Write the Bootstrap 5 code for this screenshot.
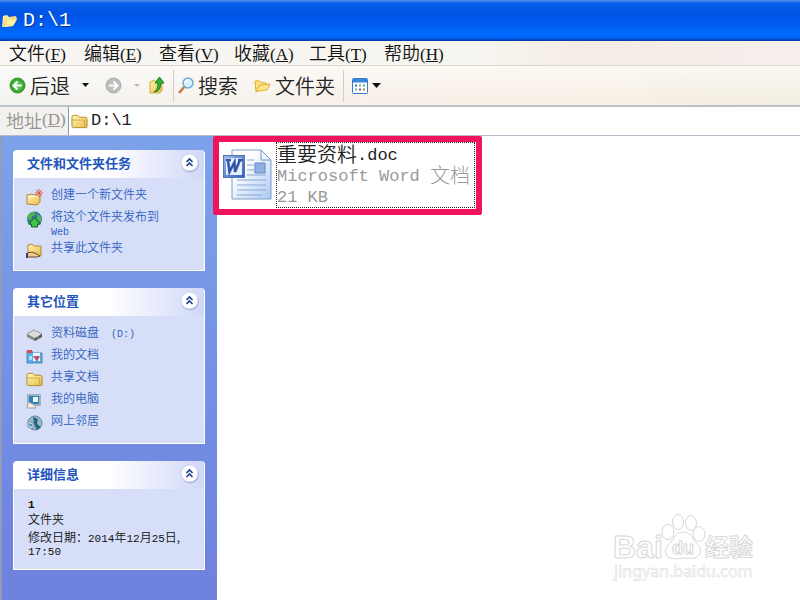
<!DOCTYPE html>
<html lang="zh-CN">
<head>
<meta charset="utf-8">
<meta name="viewport" content="width=device-width, initial-scale=1">
<title>D:\1</title>
<link rel="stylesheet" href="https://cdn.jsdelivr.net/npm/bootstrap@5.3.0/dist/css/bootstrap.min.css">
<style>
body{font-family:"Noto Sans CJK SC",sans-serif;font-size:12px;line-height:1;color:#111;background:#fff}
button{font:inherit;color:inherit;border:0;background:none;padding:0;white-space:nowrap}
.en{font-family:"Liberation Mono",monospace;font-size:17px;line-height:0}
.key{font-family:"Liberation Serif",serif;font-size:17px;line-height:0}
.titlebar{height:41px;background:linear-gradient(#5595e8 0,#0c60ee 3px,#0054e3 12px,#0058ee 22px,#006cff 34px,#0064fa 38px,#0040b0 40px);color:#fff;gap:5px;padding:0 1px}
.titlebar .en{font-size:20px;line-height:24px;text-shadow:1px 1px #02308e}
.menus{height:25px;padding-left:9px;background:linear-gradient(90deg,#f7f6f4,#f6f5ef 60%,#f6ece7 72%,#f5eeea);border-bottom:1px solid #ddd8c8}
.menus button{width:75px;text-align:left;font-size:18px;font-weight:350;padding-bottom:2px}
.tools{height:41px;padding-left:9px;background:linear-gradient(rgba(255,255,255,.6),rgba(255,255,255,0)),linear-gradient(90deg,#f4f3ef,#f8eee4 62%,#f2ede0);border-bottom:2px solid #b9c4c6}
.tools button{font-size:20px;font-weight:350;color:#222;display:flex;align-items:center;gap:4px}
.tools .sep{width:1px;height:32px;background:#d0cec5}
.addr{height:29px;background:#f2f1ed;border-bottom:1px solid #b8bbc8}
.addr label{width:68px;padding:0 0 2px 6px;font-size:18px;font-weight:350;color:#929292;white-space:nowrap}
.field{background:#fff;border-left:1px solid #7f9db9;gap:3px;padding-left:2px}
.field input{border:0;outline:0;color:#222;padding:0;min-width:0;line-height:22px}
.side{width:217px;background:linear-gradient(#7ca2ea,#6f84e0 88%,#6e82de);border-left:2px solid #929bb8;padding:14px 12px 0 11px}
.panel{background:#d7dff8;border:1px solid #fff;border-top:0;border-radius:4px 4px 0 0;margin-bottom:17px;font-weight:350}
.panel h2{height:28px;margin:0;padding:0 4px 2px 13px;background:linear-gradient(90deg,#fff 50%,#d0d8f8);border-radius:4px 4px 0 0;font-size:13px;font-weight:700;color:#1f55bd}
.panel ul{margin:0;padding:7px 10px 10px 12px;list-style:none}
.panel li{min-height:22px;display:flex;gap:8px;align-items:flex-start;padding-top:2px}
.panel li svg{margin-top:2px;flex:none}
.panel a{color:#2f62bf;text-decoration:none;line-height:14px;font-size:12px}
.panel .en{font-size:10px}
.tasks{min-height:121px}
.tasks li:nth-child(2){min-height:31px}
.places{min-height:156px}
.details{min-height:109px}
.details .info{padding:10px 10px 10px 14px;line-height:13px}
.info p{margin:0}
.info .en{font-size:11px}
.info .when{margin-top:5px}
.info .en.fw-bold{line-height:13px}
.content{min-width:0}
.file{position:relative;width:269px;height:79px;margin-left:-4px;border:6px solid #f0145c;border-radius:2px;padding-left:4px;text-align:left;gap:4px;background:#fff}
.file .names{border:1px dotted #222;height:66px;width:199px;font-size:20px;line-height:21px;font-weight:300;color:#999;white-space:nowrap}
.names .fn{color:#222;font-weight:350}
.names span{display:block;height:21px}
.names b{font-weight:400;vertical-align:2px}
.watermark{position:absolute;right:40px;bottom:14px}
</style>
<script src="https://cdn.jsdelivr.net/npm/bootstrap@5.3.0/dist/js/bootstrap.bundle.min.js"></script>
</head>
<body>
<svg class="position-absolute" width="0" height="0" xmlns="http://www.w3.org/2000/svg">
<defs>
<linearGradient id="gold" x2="1" y2="1"><stop stop-color="#fff6b8"/><stop offset="1" stop-color="#e9bc45"/></linearGradient>
<radialGradient id="green"><stop stop-color="#7ddb68"/><stop offset="1" stop-color="#279a28"/></radialGradient>
<linearGradient id="paper" x2="1" y2="1"><stop offset=".3" stop-color="#fff"/><stop offset="1" stop-color="#a9c9f5"/></linearGradient>
<linearGradient id="blue" x2="1" y2="1"><stop stop-color="#9dbcf0"/><stop offset="1" stop-color="#2f5db5"/></linearGradient>
</defs>
<symbol id="folder" viewBox="0 0 18 16"><path d="M1 13V4q0-2 2-2h4l2 2h6q2 0 2 2v8q0 1-1 1H3q-2 0-2-2z" fill="url(#gold)" stroke="#b38a1d"/><path d="M2 7h13" stroke="#fff5b8"/><path d="M1.5 7h13v7" fill="none" stroke="#c9a23c"/></symbol>
<symbol id="open" viewBox="0 0 18 16"><path d="M2 13L1 3l4-1 2 2 6 1v3" fill="#fbe184" stroke="#e3a92a"/><path d="M2 14l4-7 11-1-3 6z" fill="#fce78f" stroke="#e3a92a"/></symbol>
<symbol id="fold" viewBox="0 0 20 20"><circle cx="10" cy="10.500" r="9" fill="#7d8bb8" opacity=".5"/><circle cx="9.500" cy="9.500" r="8.500" fill="#fff" stroke="#ccd3e8"/><path d="M6.500 9l3-3 3 3M6.500 13l3-3 3 3" fill="none" stroke="#1f3f85" stroke-width="1.600"/></symbol>
</svg>
<div class="d-flex flex-column min-vh-100">
<header class="titlebar d-flex align-items-center"><svg width="17" height="18" viewBox="0 0 17 18"><path d="M1 15L2 4l4-1 2 2 7-1 1 3-4 7z" fill="url(#gold)"/><path d="M3 15l4-7 9-1-4 7z" fill="#fff0a0"/></svg><span class="en">D:\1</span></header>
<nav class="menus d-flex align-items-center" aria-label="菜单">
<button>文件<span class="key">(<u>F</u>)</span></button><button>编辑<span class="key">(<u>E</u>)</span></button><button>查看<span class="key">(<u>V</u>)</span></button><button>收藏<span class="key">(<u>A</u>)</span></button><button>工具<span class="key">(<u>T</u>)</span></button><button>帮助<span class="key">(<u>H</u>)</span></button>
</nav>
<div class="tools d-flex align-items-center" role="toolbar">
<button><svg width="17" height="17" viewBox="0 0 17 17"><circle cx="8.500" cy="8.500" r="7.500" fill="url(#green)" stroke="#369332"/><path d="M13 8.500H5M8.500 4.500l-4 4 4 4" fill="none" stroke="#fff" stroke-width="2"/></svg>后退</button>
<button class="ms-2 ps-1" aria-label="后退历史"><svg width="7" height="5"><path d="M0 0h7L3.500 4z" fill="#111"/></svg></button>
<button class="ms-3" aria-label="前进"><svg width="17" height="17" viewBox="0 0 17 17"><circle cx="8.500" cy="8.500" r="7.500" fill="#bdbdbd" stroke="#aaa"/><path d="M4 8.500h8M8.500 4.500l4 4-4 4" fill="none" stroke="#fff" stroke-width="2"/></svg></button>
<button class="ms-2 ps-1" aria-label="前进历史"><svg width="6" height="4"><path d="M0 0h6L3 3z" fill="#bbb"/></svg></button>
<button class="ms-2" aria-label="向上"><svg width="17" height="19" viewBox="0 0 17 19"><path d="M2 17V6l4-2 2 2h6v9l-3 2z" fill="url(#gold)" stroke="#d2ad3e"/><path d="M6 16q4-1 4-9H7l4.500-6L16 7h-3q0 8-7 9z" fill="#36ac35" stroke="#188022"/></svg></button>
<span class="sep ms-2"></span>
<button class="ms-1"><svg width="16" height="17" viewBox="0 0 16 17"><path d="M1 16l6-7" stroke="#bd7d51" stroke-width="2.500"/><circle cx="10" cy="6" r="5" fill="#d4efff" stroke="#73a7d2" stroke-width="1.500"/><path d="M7 6q1-3 3-3" fill="none" stroke="#fff" stroke-width="1.500"/></svg>搜索</button>
<button class="ms-3"><svg width="17" height="16"><use href="#open"/></svg>文件夹</button>
<span class="sep ms-2 me-2"></span>
<button aria-label="查看方式"><svg width="16" height="16" viewBox="0 0 16 16"><rect x=".5" y=".5" width="15" height="15" rx="1" fill="#fff" stroke="#3278cc"/><path d="M1 2.500h14" stroke="#3d83db" stroke-width="4"/><path d="M3 7.500h2M7 11.500h2" stroke="#3c6bd5" stroke-width="2"/><path d="M7 7.500h2M3 11.500h2" stroke="#8c9bb4" stroke-width="2"/><path d="M11 7.500h2" stroke="#51aa46" stroke-width="2"/><path d="M11 11.500h2" stroke="#e4702a" stroke-width="2"/></svg><svg width="9" height="6"><path d="M0 0h9L4.500 5z" fill="#111"/></svg></button>
</div>
<div class="addr d-flex align-items-stretch"><label for="path" class="d-flex align-items-center">地址<span class="key">(<u>D</u>)</span></label><div class="field d-flex flex-grow-1 align-items-center"><svg width="17" height="16"><use href="#folder"/></svg><input id="path" class="en flex-grow-1" value="D:\1"></div></div>
<main class="d-flex flex-grow-1">
<aside class="side flex-shrink-0">
<section class="panel tasks"><h2 class="d-flex align-items-center justify-content-between">文件和文件夹任务<button aria-label="折叠"><svg width="20" height="20"><use href="#fold"/></svg></button></h2>
<ul>
<li><svg width="17" height="17" viewBox="0 0 17 17"><path d="M1 15V6l5-1 2 1h6v7l-3 3z" fill="url(#gold)" stroke="#ad8330"/><path d="M2 8l10-1 1-2" fill="none" stroke="#fff"/><path d="M13 0v8M9 4h8M10 1l6 6M16 1l-6 6" stroke="#e65539"/></svg><a href="#">创建一个新文件夹</a></li>
<li><svg width="17" height="17" viewBox="0 0 17 17"><circle cx="8.500" cy="8" r="7.500" fill="#2f789d"/><path d="M1 8q1-7 7-7l2 3-4 1-1 4zM11 3l4 3v5l-4-2z" fill="#50b848"/><path d="M8.500 7l6 6h-3v3h-6v-3h-3z" fill="#43c348" stroke="#116c25"/></svg><a href="#">将这个文件夹发布到<br><span class="en">Web</span></a></li>
<li><svg width="17" height="17" viewBox="0 0 17 17"><path d="M2 12V3l4-1 2 2h7v10z" fill="url(#gold)" stroke="#b38a2d"/><path d="M1 11l5-1 5 2 3 2-3 1H1z" fill="#efc58b" stroke="#70492d"/><path d="M0 11v5h2v-5z" fill="#34466b"/></svg><a href="#">共享此文件夹</a></li>
</ul></section>
<section class="panel places"><h2 class="d-flex align-items-center justify-content-between">其它位置<button aria-label="折叠"><svg width="20" height="20"><use href="#fold"/></svg></button></h2>
<ul>
<li><svg width="17" height="16" viewBox="0 0 17 16"><path d="M1 7l7-4 8 4-7 5z" fill="#ddd" stroke="#999"/><path d="M1 7l8 4v3L1 10z" fill="#888"/><path d="M9 11l7-4v3l-7 4z" fill="#555"/><path d="M11 11l2-1" stroke="#7dd15b"/></svg><a href="#">资料磁盘<span class="en">&nbsp;&nbsp;(D:)</span></a></li>
<li><svg width="17" height="16" viewBox="0 0 17 16"><path d="M1 14V2h5l1 2h9v10z" fill="#58afe3" stroke="#4589bd"/><path d="M1 1h5v3H1z" fill="#d64b54"/><path d="M7 4h7v8H7z" fill="#e8f5ff"/><path d="M7 7l4 6 3-6z" fill="#bf5269"/><path d="M3 7h3v4H3z" fill="#a6e2ff"/></svg><a href="#">我的文档</a></li>
<li><svg width="17" height="16"><use href="#folder"/></svg><a href="#">共享文档</a></li>
<li><svg width="17" height="16" viewBox="0 0 17 16"><path d="M2 2h12v10H2z" fill="#2e82b5" stroke="#9fb1bf" stroke-width="2"/><path d="M7 4h5v5H7z" fill="#e6f7ff"/><path d="M2 9l5 2 3 4H1z" fill="#f1eee6" stroke="#a4a19e"/></svg><a href="#">我的电脑</a></li>
<li><svg width="17" height="17" viewBox="0 0 17 17"><circle cx="9" cy="8" r="7" fill="#9bbad0" stroke="#668199"/><path d="M7 2l5 2-1 5 4 3-4 3-3-6z" fill="#246680"/><path d="M2 6l5 2v6l-5-2z" fill="#eef7ff" stroke="#738b9f"/><path d="M3 8l3 1v3l-3-1z" fill="#4d9cc4"/></svg><a href="#">网上邻居</a></li>
</ul></section>
<section class="panel details"><h2 class="d-flex align-items-center justify-content-between">详细信息<button aria-label="折叠"><svg width="20" height="20"><use href="#fold"/></svg></button></h2>
<div class="info"><p class="en fw-bold">1</p><p>文件夹</p><p class="when">修改日期：<span class="en">2014</span>年<span class="en">12</span>月<span class="en">25</span>日,<br><span class="en">17:50</span></p></div></section>
</aside>
<section class="content flex-grow-1">
<button class="file d-flex">
<svg width="49" height="66" viewBox="0 0 49 66"><path d="M9 8h29l10 10v39H9z" fill="url(#paper)" stroke="#7e9cc9"/><path d="M38 8v10h10z" fill="#eaf3ff" stroke="#7895bf"/><path d="M24 18h7M24 23h7M24 28h7M24 33h19M14 38h29M14 43h29M14 48h29M14 53h25" stroke="#8aa9d6"/><path d="M32 21h10v10H32z" fill="#8eb0e1" stroke="#6589c3"/><rect x=".5" y="13.500" width="21" height="22" fill="url(#blue)" stroke="#5375ae"/><path d="M3 16h16v17H3z" fill="#e7effc"/><path d="M3 18h5M5 18l1.500 12 5-10 .5 10 5-12M15 18h5" fill="none" stroke="#3157a7" stroke-width="2.500"/></svg>
<span class="names"><span class="fn">重要资料<b class="en">.doc</b></span><span><b class="en">Microsoft Word </b>文档</span><span><b class="en">21 KB</b></span></span>
</button>
</section>
</main>
</div>
<svg class="watermark" width="148" height="76" viewBox="0 0 148 76" role="img" aria-label="Baidu 经验">
<g fill="#fff" stroke="#d8d8d8" stroke-width="1">
<ellipse cx="56" cy="22" rx="6" ry="7.500"/><ellipse cx="66" cy="12" rx="5.500" ry="7.500"/><ellipse cx="79" cy="13" rx="5.500" ry="7.500"/><ellipse cx="87" cy="24" rx="6" ry="7.500"/>
<path d="M71 22q8 0 12 10 8 6 5 12-3 6-17 4-14 3-17-4-2-7 6-13 4-9 11-9z"/>
<text x="1" y="48" font-family="Liberation Sans,sans-serif" font-weight="700" font-size="32">Bai</text>
<text x="60" y="44" font-family="Liberation Sans,sans-serif" font-weight="700" font-size="18">du</text>
<text x="93" y="46" font-family="Noto Sans CJK SC,sans-serif" font-weight="700" font-size="24">经验</text>
<text x="2" y="67" font-family="Noto Sans,sans-serif" font-size="16" stroke-width=".5">jingyan.baidu.com</text>
</g></svg>
</body>
</html>
